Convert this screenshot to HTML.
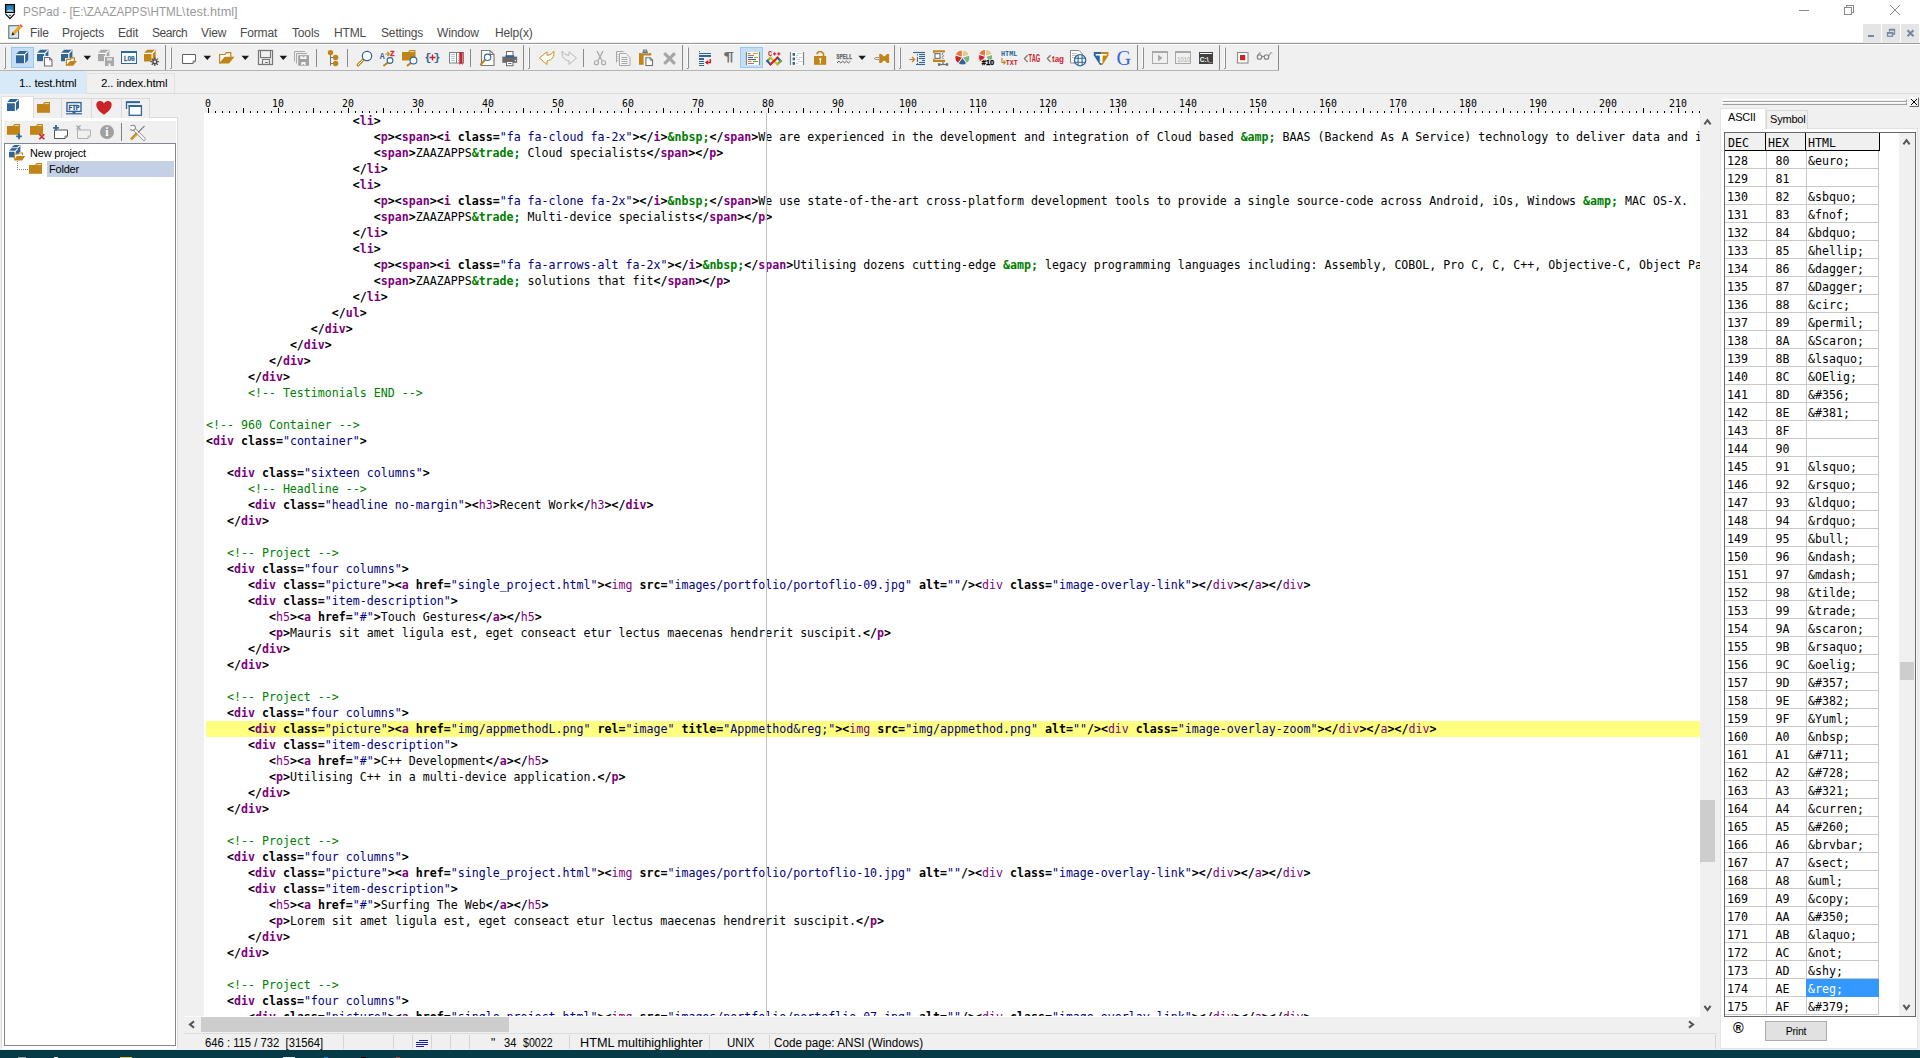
<!DOCTYPE html>
<html><head><meta charset="utf-8"><title>PSPad</title>
<style>
*{box-sizing:border-box}
html,body{margin:0;padding:0}
body{width:1920px;height:1058px;overflow:hidden;background:#f0f0f0;position:relative;font-family:"Liberation Sans",sans-serif;font-size:12px;color:#000}
.abs,#app div,#app span,#app i,#app svg{position:absolute}
#app{position:absolute;left:0;top:0;width:1920px;height:1058px;overflow:hidden}
/* title + menu */
#titlebar{left:0;top:0;width:1920px;height:43px;background:#fff}
#title,#title2{left:23px;top:5px;font-size:12px;color:#999;white-space:pre;transform-origin:0 0}
#title2{left:185.6px}
.menu span{top:26px;font-size:12px;letter-spacing:-0.15px;color:#4a4a4a;white-space:pre}
/* toolbar */
#tbline{left:0;top:43px;width:1920px;height:1px;background:#9a9a9a}
#tbline0{left:0;top:42px;width:1920px;height:1px;background:#ececec}
#tbline2{left:0;top:44px;width:1920px;height:1px;background:#fff}
#tbbot{left:0;top:70px;width:1279px;height:1px;background:#b4b4b4}
/* file tabs */
#tab1{left:0;top:71px;width:86px;height:23px;background:#d8e9f8}
#tab2{left:86px;top:73px;width:89px;height:20px;background:#f0f0f0;border:1px solid #e2e2e2;border-bottom:none}
.ftab{font-size:11.5px;white-space:pre;top:4px;letter-spacing:-0.15px}
#tabline{left:0;top:93px;width:1920px;height:1px;background:#dcdcdc}
/* editor */
#editor{left:204px;top:113px;width:1496px;height:903px;background:#fff;overflow:hidden}
#gutter{left:184px;top:113px;width:20px;height:903px;background:#f5f5f5}
#code{left:2px;top:0;width:1494px}
#app .ln{position:relative;height:16px;line-height:16px;white-space:pre;font-family:"DejaVu Sans Mono","Liberation Mono",monospace;font-size:11.627px;color:#000;width:1494px;overflow:hidden}
#app .ln span{position:static}
#app .ln.hl{background:#ffff80}
.T{color:#800080;font-weight:bold}
.t{color:#800080}
.b{font-weight:bold}
.v{color:#000080}
.e{color:#008000;font-weight:bold}
.c{color:#008000}
#margin{left:766px;top:113px;width:1px;height:903px;background:#c0c0c0}
/* ruler */
#ruler{left:204px;top:94px;width:1496px;height:19px;overflow:hidden}
.tk{width:1px;height:5px;top:14px;background:#000}
.td{width:1px;height:2px;top:17px;background:#000}
.rn{top:5px;width:30px;text-align:center;font-family:"DejaVu Sans Mono","Liberation Mono",monospace;font-size:9.9px;line-height:10px}

/* left panel */
#lp{left:1px;top:117px;width:177px;height:932px;background:#fff;border:1px solid #d9d9d9;border-bottom-color:#fff}
#lptb{left:4px;top:121px;width:172px;height:22px;background:#f0f0f0}
#tree{left:4px;top:143px;width:172px;height:903px;background:#fff;border:1px solid #828790}
.ltab{top:98px;height:20px;background:#f0f0f0;border:1px solid #d9d9d9;border-bottom:none}
#ltab0{left:1px;top:96px;width:33px;height:22px;background:#fff;border:1px solid #e0e0e0;border-bottom:none}
.tv{font-size:11px;white-space:pre;letter-spacing:-0.2px}
#sel{left:47px;top:161px;width:127px;height:16px;background:#c4d0e6}
/* right panel */
#vs{left:1700px;top:113px;width:17px;height:903px;background:#f0f0f0}
#vthumb{left:1700px;top:800px;width:15px;height:62px;background:#cdcdcd}
#rp{left:1720px;top:128px;width:198px;height:921px;background:#fff;border:1px solid #e3e3e3}
#rtab0{left:1720px;top:108px;width:46px;height:21px;background:#fff;border:1px solid #e3e3e3;border-bottom:none}
#rtab1{left:1766px;top:110px;width:42px;height:19px;background:#f0f0f0;border:1px solid #d9d9d9;border-bottom:none}
.rtl{font-size:11px;white-space:pre;letter-spacing:-0.2px}
#grid{left:1724px;top:132px;width:192px;height:885px;background:#fff;border:1px solid #696969;overflow:hidden}
#gh{left:0;top:0;width:155px;height:18px;background:#f0f0f0;border:1px solid #000;border-left:none;border-top:none}
.hd{top:1px;font-family:"DejaVu Sans Mono","Liberation Mono",monospace;font-size:11.627px;line-height:18px;white-space:pre}
#gh i{top:0;width:1px;height:17px;background:#000;display:block}
#app .tr{position:relative;width:154px;height:18px;border-bottom:1px solid #c8c8c8;font-family:"DejaVu Sans Mono","Liberation Mono",monospace;font-size:11.627px;line-height:20px;white-space:pre}
#rows{left:0;top:18px;width:154px}
.c1{left:2px;top:0}
.c2{left:41px;top:0;width:40px;text-align:center;padding-right:8px;border-left:1px solid #c8c8c8;height:18px}
.c3{left:81px;top:0;width:73px;padding-left:1px;border-left:1px solid #c8c8c8;border-right:1px solid #c8c8c8;height:18px}
#app .c3.sel{background:#3399ff;color:#fff;left:81px;width:73px;padding-left:2px;border:none}
#gs{left:174px;top:0;width:16px;height:883px;background:#f0f0f0}
#gthumb{left:175px;top:529px;width:14px;height:18px;background:#cdcdcd}
#print{left:1765px;top:1021px;width:62px;height:20px;background:#e1e1e1;border:1px solid #adadad;text-align:center;line-height:18px;font-size:10.5px;letter-spacing:-0.2px}
/* bottom */
#hs{left:184px;top:1016px;width:1516px;height:17px;background:#f0f0f0;border-top:1px solid #fff}
#hthumb{left:201px;top:1017px;width:308px;height:15px;background:#cdcdcd}
#sb{left:184px;top:1033px;width:1533px;height:17px;background:#f0f0f0;border-top:1px solid #dcdcdc}
.sbt{top:1036px;font-size:12px;white-space:pre;transform-origin:0 0}
.sbs{top:1035px;width:1px;height:14px;background:#d4d4d4}
#task{left:0;top:1050px;width:1920px;height:8px;background:#063a46}
.chev{fill:none;stroke:#5a5a5a;stroke-width:2}

.grip{left:1722px;width:1185px;height:3px;border-top:1px solid #fff;border-left:1px solid #fff;border-bottom:1px solid #a0a0a0;border-right:1px solid #a0a0a0}
#rpx{left:1909px;top:97px;width:10px;height:10px;border:1px solid #fff;border-right-color:#696969;border-bottom-color:#696969;background:#f0f0f0}
</style></head><body><div id="app">
<div id="titlebar"></div>
<span id="title" style="transform:scaleX(.966)">PSPad - [E:\ZAAZAPPS\HTML\</span><span id="title2" style="transform:scaleX(1.06)">test.html]</span>
<div class="menu"><span style="left:30px">File</span><span style="left:62px">Projects</span><span style="left:118px">Edit</span><span style="left:152px;letter-spacing:-0.45px">Search</span><span style="left:201px">View</span><span style="left:240px">Format</span><span style="left:292px">Tools</span><span style="left:334px">HTML</span><span style="left:381px">Settings</span><span style="left:437px">Window</span><span style="left:495px">Help(x)</span></div>
<div id="tbline0"></div><div id="tbline"></div><div id="tbline2"></div><div id="tbbot"></div>
<div id="tabline"></div>
<div id="tab1"><span class="ftab" style="left:19px;top:6px">1.. test.html</span></div>
<div id="tab2"><span class="ftab" style="left:14px;top:3px">2.. index.html</span></div>
<div id="ruler"><i class="tk" style="left:4px"></i><i class="td" style="left:11px"></i><i class="td" style="left:18px"></i><i class="td" style="left:25px"></i><i class="td" style="left:32px"></i><i class="tk" style="left:39px"></i><i class="td" style="left:46px"></i><i class="td" style="left:53px"></i><i class="td" style="left:60px"></i><i class="td" style="left:67px"></i><i class="tk" style="left:74px"></i><i class="td" style="left:81px"></i><i class="td" style="left:88px"></i><i class="td" style="left:95px"></i><i class="td" style="left:102px"></i><i class="tk" style="left:109px"></i><i class="td" style="left:116px"></i><i class="td" style="left:123px"></i><i class="td" style="left:130px"></i><i class="td" style="left:137px"></i><i class="tk" style="left:144px"></i><i class="td" style="left:151px"></i><i class="td" style="left:158px"></i><i class="td" style="left:165px"></i><i class="td" style="left:172px"></i><i class="tk" style="left:179px"></i><i class="td" style="left:186px"></i><i class="td" style="left:193px"></i><i class="td" style="left:200px"></i><i class="td" style="left:207px"></i><i class="tk" style="left:214px"></i><i class="td" style="left:221px"></i><i class="td" style="left:228px"></i><i class="td" style="left:235px"></i><i class="td" style="left:242px"></i><i class="tk" style="left:249px"></i><i class="td" style="left:256px"></i><i class="td" style="left:263px"></i><i class="td" style="left:270px"></i><i class="td" style="left:277px"></i><i class="tk" style="left:284px"></i><i class="td" style="left:291px"></i><i class="td" style="left:298px"></i><i class="td" style="left:305px"></i><i class="td" style="left:312px"></i><i class="tk" style="left:319px"></i><i class="td" style="left:326px"></i><i class="td" style="left:333px"></i><i class="td" style="left:340px"></i><i class="td" style="left:347px"></i><i class="tk" style="left:354px"></i><i class="td" style="left:361px"></i><i class="td" style="left:368px"></i><i class="td" style="left:375px"></i><i class="td" style="left:382px"></i><i class="tk" style="left:389px"></i><i class="td" style="left:396px"></i><i class="td" style="left:403px"></i><i class="td" style="left:410px"></i><i class="td" style="left:417px"></i><i class="tk" style="left:424px"></i><i class="td" style="left:431px"></i><i class="td" style="left:438px"></i><i class="td" style="left:445px"></i><i class="td" style="left:452px"></i><i class="tk" style="left:459px"></i><i class="td" style="left:466px"></i><i class="td" style="left:473px"></i><i class="td" style="left:480px"></i><i class="td" style="left:487px"></i><i class="tk" style="left:494px"></i><i class="td" style="left:501px"></i><i class="td" style="left:508px"></i><i class="td" style="left:515px"></i><i class="td" style="left:522px"></i><i class="tk" style="left:529px"></i><i class="td" style="left:536px"></i><i class="td" style="left:543px"></i><i class="td" style="left:550px"></i><i class="td" style="left:557px"></i><i class="tk" style="left:564px"></i><i class="td" style="left:571px"></i><i class="td" style="left:578px"></i><i class="td" style="left:585px"></i><i class="td" style="left:592px"></i><i class="tk" style="left:599px"></i><i class="td" style="left:606px"></i><i class="td" style="left:613px"></i><i class="td" style="left:620px"></i><i class="td" style="left:627px"></i><i class="tk" style="left:634px"></i><i class="td" style="left:641px"></i><i class="td" style="left:648px"></i><i class="td" style="left:655px"></i><i class="td" style="left:662px"></i><i class="tk" style="left:669px"></i><i class="td" style="left:676px"></i><i class="td" style="left:683px"></i><i class="td" style="left:690px"></i><i class="td" style="left:697px"></i><i class="tk" style="left:704px"></i><i class="td" style="left:711px"></i><i class="td" style="left:718px"></i><i class="td" style="left:725px"></i><i class="td" style="left:732px"></i><i class="tk" style="left:739px"></i><i class="td" style="left:746px"></i><i class="td" style="left:753px"></i><i class="td" style="left:760px"></i><i class="td" style="left:767px"></i><i class="tk" style="left:774px"></i><i class="td" style="left:781px"></i><i class="td" style="left:788px"></i><i class="td" style="left:795px"></i><i class="td" style="left:802px"></i><i class="tk" style="left:809px"></i><i class="td" style="left:816px"></i><i class="td" style="left:823px"></i><i class="td" style="left:830px"></i><i class="td" style="left:837px"></i><i class="tk" style="left:844px"></i><i class="td" style="left:851px"></i><i class="td" style="left:858px"></i><i class="td" style="left:865px"></i><i class="td" style="left:872px"></i><i class="tk" style="left:879px"></i><i class="td" style="left:886px"></i><i class="td" style="left:893px"></i><i class="td" style="left:900px"></i><i class="td" style="left:907px"></i><i class="tk" style="left:914px"></i><i class="td" style="left:921px"></i><i class="td" style="left:928px"></i><i class="td" style="left:935px"></i><i class="td" style="left:942px"></i><i class="tk" style="left:949px"></i><i class="td" style="left:956px"></i><i class="td" style="left:963px"></i><i class="td" style="left:970px"></i><i class="td" style="left:977px"></i><i class="tk" style="left:984px"></i><i class="td" style="left:991px"></i><i class="td" style="left:998px"></i><i class="td" style="left:1005px"></i><i class="td" style="left:1012px"></i><i class="tk" style="left:1019px"></i><i class="td" style="left:1026px"></i><i class="td" style="left:1033px"></i><i class="td" style="left:1040px"></i><i class="td" style="left:1047px"></i><i class="tk" style="left:1054px"></i><i class="td" style="left:1061px"></i><i class="td" style="left:1068px"></i><i class="td" style="left:1075px"></i><i class="td" style="left:1082px"></i><i class="tk" style="left:1089px"></i><i class="td" style="left:1096px"></i><i class="td" style="left:1103px"></i><i class="td" style="left:1110px"></i><i class="td" style="left:1117px"></i><i class="tk" style="left:1124px"></i><i class="td" style="left:1131px"></i><i class="td" style="left:1138px"></i><i class="td" style="left:1145px"></i><i class="td" style="left:1152px"></i><i class="tk" style="left:1159px"></i><i class="td" style="left:1166px"></i><i class="td" style="left:1173px"></i><i class="td" style="left:1180px"></i><i class="td" style="left:1187px"></i><i class="tk" style="left:1194px"></i><i class="td" style="left:1201px"></i><i class="td" style="left:1208px"></i><i class="td" style="left:1215px"></i><i class="td" style="left:1222px"></i><i class="tk" style="left:1229px"></i><i class="td" style="left:1236px"></i><i class="td" style="left:1243px"></i><i class="td" style="left:1250px"></i><i class="td" style="left:1257px"></i><i class="tk" style="left:1264px"></i><i class="td" style="left:1271px"></i><i class="td" style="left:1278px"></i><i class="td" style="left:1285px"></i><i class="td" style="left:1292px"></i><i class="tk" style="left:1299px"></i><i class="td" style="left:1306px"></i><i class="td" style="left:1313px"></i><i class="td" style="left:1320px"></i><i class="td" style="left:1327px"></i><i class="tk" style="left:1334px"></i><i class="td" style="left:1341px"></i><i class="td" style="left:1348px"></i><i class="td" style="left:1355px"></i><i class="td" style="left:1362px"></i><i class="tk" style="left:1369px"></i><i class="td" style="left:1376px"></i><i class="td" style="left:1383px"></i><i class="td" style="left:1390px"></i><i class="td" style="left:1397px"></i><i class="tk" style="left:1404px"></i><i class="td" style="left:1411px"></i><i class="td" style="left:1418px"></i><i class="td" style="left:1425px"></i><i class="td" style="left:1432px"></i><i class="tk" style="left:1439px"></i><i class="td" style="left:1446px"></i><i class="td" style="left:1453px"></i><i class="td" style="left:1460px"></i><i class="td" style="left:1467px"></i><i class="tk" style="left:1474px"></i><i class="td" style="left:1481px"></i><i class="td" style="left:1488px"></i><i class="td" style="left:1495px"></i><span class="rn" style="left:-11px">0</span><span class="rn" style="left:59px">10</span><span class="rn" style="left:129px">20</span><span class="rn" style="left:199px">30</span><span class="rn" style="left:269px">40</span><span class="rn" style="left:339px">50</span><span class="rn" style="left:409px">60</span><span class="rn" style="left:479px">70</span><span class="rn" style="left:549px">80</span><span class="rn" style="left:619px">90</span><span class="rn" style="left:689px">100</span><span class="rn" style="left:759px">110</span><span class="rn" style="left:829px">120</span><span class="rn" style="left:899px">130</span><span class="rn" style="left:969px">140</span><span class="rn" style="left:1039px">150</span><span class="rn" style="left:1109px">160</span><span class="rn" style="left:1179px">170</span><span class="rn" style="left:1249px">180</span><span class="rn" style="left:1319px">190</span><span class="rn" style="left:1389px">200</span><span class="rn" style="left:1459px">210</span></div>
<div id="editor"><div id="code">
<div class="ln">                     <span class="b">&lt;</span><span class="T">li</span><span class="b">&gt;</span></div>
<div class="ln">                        <span class="b">&lt;</span><span class="T">p</span><span class="b">&gt;</span><span class="b">&lt;</span><span class="T">span</span><span class="b">&gt;</span><span class="b">&lt;</span><span class="T">i</span> <span class="b">class=</span><span class="v">"fa fa-cloud fa-2x"</span><span class="b">&gt;</span><span class="b">&lt;/</span><span class="T">i</span><span class="b">&gt;</span><span class="e">&amp;nbsp;</span><span class="b">&lt;/</span><span class="T">span</span><span class="b">&gt;</span>We are experienced in the development and integration of Cloud based <span class="e">&amp;amp;</span> BAAS (Backend As A Service) technology to deliver data and information</div>
<div class="ln">                        <span class="b">&lt;</span><span class="T">span</span><span class="b">&gt;</span>ZAAZAPPS<span class="e">&amp;trade;</span> Cloud specialists<span class="b">&lt;/</span><span class="T">span</span><span class="b">&gt;</span><span class="b">&lt;/</span><span class="T">p</span><span class="b">&gt;</span></div>
<div class="ln">                     <span class="b">&lt;/</span><span class="T">li</span><span class="b">&gt;</span></div>
<div class="ln">                     <span class="b">&lt;</span><span class="T">li</span><span class="b">&gt;</span></div>
<div class="ln">                        <span class="b">&lt;</span><span class="T">p</span><span class="b">&gt;</span><span class="b">&lt;</span><span class="T">span</span><span class="b">&gt;</span><span class="b">&lt;</span><span class="T">i</span> <span class="b">class=</span><span class="v">"fa fa-clone fa-2x"</span><span class="b">&gt;</span><span class="b">&lt;/</span><span class="T">i</span><span class="b">&gt;</span><span class="e">&amp;nbsp;</span><span class="b">&lt;/</span><span class="T">span</span><span class="b">&gt;</span>We use state-of-the-art cross-platform development tools to provide a single source-code across Android, iOs, Windows <span class="e">&amp;amp;</span> MAC OS-X.</div>
<div class="ln">                        <span class="b">&lt;</span><span class="T">span</span><span class="b">&gt;</span>ZAAZAPPS<span class="e">&amp;trade;</span> Multi-device specialists<span class="b">&lt;/</span><span class="T">span</span><span class="b">&gt;</span><span class="b">&lt;/</span><span class="T">p</span><span class="b">&gt;</span></div>
<div class="ln">                     <span class="b">&lt;/</span><span class="T">li</span><span class="b">&gt;</span></div>
<div class="ln">                     <span class="b">&lt;</span><span class="T">li</span><span class="b">&gt;</span></div>
<div class="ln">                        <span class="b">&lt;</span><span class="T">p</span><span class="b">&gt;</span><span class="b">&lt;</span><span class="T">span</span><span class="b">&gt;</span><span class="b">&lt;</span><span class="T">i</span> <span class="b">class=</span><span class="v">"fa fa-arrows-alt fa-2x"</span><span class="b">&gt;</span><span class="b">&lt;/</span><span class="T">i</span><span class="b">&gt;</span><span class="e">&amp;nbsp;</span><span class="b">&lt;/</span><span class="T">span</span><span class="b">&gt;</span>Utilising dozens cutting-edge <span class="e">&amp;amp;</span> legacy programming languages including: Assembly, COBOL, Pro C, C, C++, Objective-C, Object Pascal</div>
<div class="ln">                        <span class="b">&lt;</span><span class="T">span</span><span class="b">&gt;</span>ZAAZAPPS<span class="e">&amp;trade;</span> solutions that fit<span class="b">&lt;/</span><span class="T">span</span><span class="b">&gt;</span><span class="b">&lt;/</span><span class="T">p</span><span class="b">&gt;</span></div>
<div class="ln">                     <span class="b">&lt;/</span><span class="T">li</span><span class="b">&gt;</span></div>
<div class="ln">                  <span class="b">&lt;/</span><span class="T">ul</span><span class="b">&gt;</span></div>
<div class="ln">               <span class="b">&lt;/</span><span class="T">div</span><span class="b">&gt;</span></div>
<div class="ln">            <span class="b">&lt;/</span><span class="T">div</span><span class="b">&gt;</span></div>
<div class="ln">         <span class="b">&lt;/</span><span class="T">div</span><span class="b">&gt;</span></div>
<div class="ln">      <span class="b">&lt;/</span><span class="T">div</span><span class="b">&gt;</span></div>
<div class="ln">      <span class="c">&lt;!-- Testimonials END --&gt;</span></div>
<div class="ln"></div>
<div class="ln"><span class="c">&lt;!-- 960 Container --&gt;</span></div>
<div class="ln"><span class="b">&lt;</span><span class="T">div</span> <span class="b">class=</span><span class="v">"container"</span><span class="b">&gt;</span></div>
<div class="ln"></div>
<div class="ln">   <span class="b">&lt;</span><span class="T">div</span> <span class="b">class=</span><span class="v">"sixteen columns"</span><span class="b">&gt;</span></div>
<div class="ln">      <span class="c">&lt;!-- Headline --&gt;</span></div>
<div class="ln">      <span class="b">&lt;</span><span class="T">div</span> <span class="b">class=</span><span class="v">"headline no-margin"</span><span class="b">&gt;</span><span class="b">&lt;</span><span class="t">h3</span><span class="b">&gt;</span>Recent Work<span class="b">&lt;/</span><span class="t">h3</span><span class="b">&gt;</span><span class="b">&lt;/</span><span class="T">div</span><span class="b">&gt;</span></div>
<div class="ln">   <span class="b">&lt;/</span><span class="T">div</span><span class="b">&gt;</span></div>
<div class="ln"></div>
<div class="ln">   <span class="c">&lt;!-- Project --&gt;</span></div>
<div class="ln">   <span class="b">&lt;</span><span class="T">div</span> <span class="b">class=</span><span class="v">"four columns"</span><span class="b">&gt;</span></div>
<div class="ln">      <span class="b">&lt;</span><span class="T">div</span> <span class="b">class=</span><span class="v">"picture"</span><span class="b">&gt;</span><span class="b">&lt;</span><span class="T">a</span> <span class="b">href=</span><span class="v">"single_project.html"</span><span class="b">&gt;</span><span class="b">&lt;</span><span class="t">img</span> <span class="b">src=</span><span class="v">"images/portfolio/portoflio-09.jpg"</span> <span class="b">alt=</span><span class="v">""</span><span class="b">/&gt;</span><span class="b">&lt;</span><span class="t">div</span> <span class="b">class=</span><span class="v">"image-overlay-link"</span><span class="b">&gt;</span><span class="b">&lt;/</span><span class="t">div</span><span class="b">&gt;</span><span class="b">&lt;/</span><span class="t">a</span><span class="b">&gt;</span><span class="b">&lt;/</span><span class="t">div</span><span class="b">&gt;</span></div>
<div class="ln">      <span class="b">&lt;</span><span class="T">div</span> <span class="b">class=</span><span class="v">"item-description"</span><span class="b">&gt;</span></div>
<div class="ln">         <span class="b">&lt;</span><span class="t">h5</span><span class="b">&gt;</span><span class="b">&lt;</span><span class="T">a</span> <span class="b">href=</span><span class="v">"#"</span><span class="b">&gt;</span>Touch Gestures<span class="b">&lt;/</span><span class="T">a</span><span class="b">&gt;</span><span class="b">&lt;/</span><span class="t">h5</span><span class="b">&gt;</span></div>
<div class="ln">         <span class="b">&lt;</span><span class="T">p</span><span class="b">&gt;</span>Mauris sit amet ligula est, eget conseact etur lectus maecenas hendrerit suscipit.<span class="b">&lt;/</span><span class="T">p</span><span class="b">&gt;</span></div>
<div class="ln">      <span class="b">&lt;/</span><span class="T">div</span><span class="b">&gt;</span></div>
<div class="ln">   <span class="b">&lt;/</span><span class="T">div</span><span class="b">&gt;</span></div>
<div class="ln"></div>
<div class="ln">   <span class="c">&lt;!-- Project --&gt;</span></div>
<div class="ln">   <span class="b">&lt;</span><span class="T">div</span> <span class="b">class=</span><span class="v">"four columns"</span><span class="b">&gt;</span></div>
<div class="ln hl">      <span class="b">&lt;</span><span class="T">div</span> <span class="b">class=</span><span class="v">"picture"</span><span class="b">&gt;</span><span class="b">&lt;</span><span class="T">a</span> <span class="b">href=</span><span class="v">"img/appmethodL.png"</span> <span class="b">rel=</span><span class="v">"image"</span> <span class="b">title=</span><span class="v">"Appmethod&amp;reg;"</span><span class="b">&gt;</span><span class="b">&lt;</span><span class="t">img</span> <span class="b">src=</span><span class="v">"img/appmethod.png"</span> <span class="b">alt=</span><span class="v">""</span><span class="b">/&gt;</span><span class="b">&lt;</span><span class="t">div</span> <span class="b">class=</span><span class="v">"image-overlay-zoom"</span><span class="b">&gt;</span><span class="b">&lt;/</span><span class="t">div</span><span class="b">&gt;</span><span class="b">&lt;/</span><span class="t">a</span><span class="b">&gt;</span><span class="b">&lt;/</span><span class="t">div</span><span class="b">&gt;</span></div>
<div class="ln">      <span class="b">&lt;</span><span class="T">div</span> <span class="b">class=</span><span class="v">"item-description"</span><span class="b">&gt;</span></div>
<div class="ln">         <span class="b">&lt;</span><span class="t">h5</span><span class="b">&gt;</span><span class="b">&lt;</span><span class="T">a</span> <span class="b">href=</span><span class="v">"#"</span><span class="b">&gt;</span>C++ Development<span class="b">&lt;/</span><span class="T">a</span><span class="b">&gt;</span><span class="b">&lt;/</span><span class="t">h5</span><span class="b">&gt;</span></div>
<div class="ln">         <span class="b">&lt;</span><span class="T">p</span><span class="b">&gt;</span>Utilising C++ in a multi-device application.<span class="b">&lt;/</span><span class="T">p</span><span class="b">&gt;</span></div>
<div class="ln">      <span class="b">&lt;/</span><span class="T">div</span><span class="b">&gt;</span></div>
<div class="ln">   <span class="b">&lt;/</span><span class="T">div</span><span class="b">&gt;</span></div>
<div class="ln"></div>
<div class="ln">   <span class="c">&lt;!-- Project --&gt;</span></div>
<div class="ln">   <span class="b">&lt;</span><span class="T">div</span> <span class="b">class=</span><span class="v">"four columns"</span><span class="b">&gt;</span></div>
<div class="ln">      <span class="b">&lt;</span><span class="T">div</span> <span class="b">class=</span><span class="v">"picture"</span><span class="b">&gt;</span><span class="b">&lt;</span><span class="T">a</span> <span class="b">href=</span><span class="v">"single_project.html"</span><span class="b">&gt;</span><span class="b">&lt;</span><span class="t">img</span> <span class="b">src=</span><span class="v">"images/portfolio/portoflio-10.jpg"</span> <span class="b">alt=</span><span class="v">""</span><span class="b">/&gt;</span><span class="b">&lt;</span><span class="t">div</span> <span class="b">class=</span><span class="v">"image-overlay-link"</span><span class="b">&gt;</span><span class="b">&lt;/</span><span class="t">div</span><span class="b">&gt;</span><span class="b">&lt;/</span><span class="t">a</span><span class="b">&gt;</span><span class="b">&lt;/</span><span class="t">div</span><span class="b">&gt;</span></div>
<div class="ln">      <span class="b">&lt;</span><span class="T">div</span> <span class="b">class=</span><span class="v">"item-description"</span><span class="b">&gt;</span></div>
<div class="ln">         <span class="b">&lt;</span><span class="t">h5</span><span class="b">&gt;</span><span class="b">&lt;</span><span class="T">a</span> <span class="b">href=</span><span class="v">"#"</span><span class="b">&gt;</span>Surfing The Web<span class="b">&lt;/</span><span class="T">a</span><span class="b">&gt;</span><span class="b">&lt;/</span><span class="t">h5</span><span class="b">&gt;</span></div>
<div class="ln">         <span class="b">&lt;</span><span class="T">p</span><span class="b">&gt;</span>Lorem sit amet ligula est, eget conseact etur lectus maecenas hendrerit suscipit.<span class="b">&lt;/</span><span class="T">p</span><span class="b">&gt;</span></div>
<div class="ln">      <span class="b">&lt;/</span><span class="T">div</span><span class="b">&gt;</span></div>
<div class="ln">   <span class="b">&lt;/</span><span class="T">div</span><span class="b">&gt;</span></div>
<div class="ln"></div>
<div class="ln">   <span class="c">&lt;!-- Project --&gt;</span></div>
<div class="ln">   <span class="b">&lt;</span><span class="T">div</span> <span class="b">class=</span><span class="v">"four columns"</span><span class="b">&gt;</span></div>
<div class="ln">      <span class="b">&lt;</span><span class="T">div</span> <span class="b">class=</span><span class="v">"picture"</span><span class="b">&gt;</span><span class="b">&lt;</span><span class="T">a</span> <span class="b">href=</span><span class="v">"single_project.html"</span><span class="b">&gt;</span><span class="b">&lt;</span><span class="t">img</span> <span class="b">src=</span><span class="v">"images/portfolio/portoflio-07.jpg"</span> <span class="b">alt=</span><span class="v">""</span><span class="b">/&gt;</span><span class="b">&lt;</span><span class="t">div</span> <span class="b">class=</span><span class="v">"image-overlay-link"</span><span class="b">&gt;</span><span class="b">&lt;/</span><span class="t">div</span><span class="b">&gt;</span><span class="b">&lt;/</span><span class="t">a</span><span class="b">&gt;</span><span class="b">&lt;/</span><span class="t">div</span><span class="b">&gt;</span></div>
</div></div>
<div id="margin"></div>
<div id="lp"></div><div id="lptb"></div>
<div id="ltab0"></div><div class="ltab" style="left:33px;width:29px"></div><div class="ltab" style="left:61px;width:31px"></div><div class="ltab" style="left:91px;width:31px"></div><div class="ltab" style="left:121px;width:29px"></div>
<div id="tree"></div><div id="sel"></div>
<span class="tv" style="left:30px;top:147px">New project</span><span class="tv" style="left:49px;top:163px">Folder</span>

<div id="vs"></div><div id="vthumb"></div>
<div class="grip" style="top:99px;width:185px"></div><div class="grip" style="top:102px;width:185px"></div><div id="rpx"></div><svg style="left:1910px;top:98px" width="8" height="8"><path d="M1 1L7 7M7 1L1 7" stroke="#000" stroke-width="1" fill="none"/></svg>
<div id="rp"></div><div id="rtab0"></div><div id="rtab1"></div>
<span class="rtl" style="left:1728px;top:111px">ASCII</span><span class="rtl" style="left:1770px;top:113px">Symbol</span>
<div id="grid"><div id="gh"><span class="hd" style="left:3px">DEC</span><i style="left:40px"></i><span class="hd" style="left:43px">HEX</span><i style="left:80px"></i><span class="hd" style="left:83px">HTML</span></div>
<div id="rows">
<div class="tr"><span class="c1">128</span><span class="c2">80</span><span class="c3">&amp;euro;</span></div>
<div class="tr"><span class="c1">129</span><span class="c2">81</span><span class="c3"></span></div>
<div class="tr"><span class="c1">130</span><span class="c2">82</span><span class="c3">&amp;sbquo;</span></div>
<div class="tr"><span class="c1">131</span><span class="c2">83</span><span class="c3">&amp;fnof;</span></div>
<div class="tr"><span class="c1">132</span><span class="c2">84</span><span class="c3">&amp;bdquo;</span></div>
<div class="tr"><span class="c1">133</span><span class="c2">85</span><span class="c3">&amp;hellip;</span></div>
<div class="tr"><span class="c1">134</span><span class="c2">86</span><span class="c3">&amp;dagger;</span></div>
<div class="tr"><span class="c1">135</span><span class="c2">87</span><span class="c3">&amp;Dagger;</span></div>
<div class="tr"><span class="c1">136</span><span class="c2">88</span><span class="c3">&amp;circ;</span></div>
<div class="tr"><span class="c1">137</span><span class="c2">89</span><span class="c3">&amp;permil;</span></div>
<div class="tr"><span class="c1">138</span><span class="c2">8A</span><span class="c3">&amp;Scaron;</span></div>
<div class="tr"><span class="c1">139</span><span class="c2">8B</span><span class="c3">&amp;lsaquo;</span></div>
<div class="tr"><span class="c1">140</span><span class="c2">8C</span><span class="c3">&amp;OElig;</span></div>
<div class="tr"><span class="c1">141</span><span class="c2">8D</span><span class="c3">&amp;#356;</span></div>
<div class="tr"><span class="c1">142</span><span class="c2">8E</span><span class="c3">&amp;#381;</span></div>
<div class="tr"><span class="c1">143</span><span class="c2">8F</span><span class="c3"></span></div>
<div class="tr"><span class="c1">144</span><span class="c2">90</span><span class="c3"></span></div>
<div class="tr"><span class="c1">145</span><span class="c2">91</span><span class="c3">&amp;lsquo;</span></div>
<div class="tr"><span class="c1">146</span><span class="c2">92</span><span class="c3">&amp;rsquo;</span></div>
<div class="tr"><span class="c1">147</span><span class="c2">93</span><span class="c3">&amp;ldquo;</span></div>
<div class="tr"><span class="c1">148</span><span class="c2">94</span><span class="c3">&amp;rdquo;</span></div>
<div class="tr"><span class="c1">149</span><span class="c2">95</span><span class="c3">&amp;bull;</span></div>
<div class="tr"><span class="c1">150</span><span class="c2">96</span><span class="c3">&amp;ndash;</span></div>
<div class="tr"><span class="c1">151</span><span class="c2">97</span><span class="c3">&amp;mdash;</span></div>
<div class="tr"><span class="c1">152</span><span class="c2">98</span><span class="c3">&amp;tilde;</span></div>
<div class="tr"><span class="c1">153</span><span class="c2">99</span><span class="c3">&amp;trade;</span></div>
<div class="tr"><span class="c1">154</span><span class="c2">9A</span><span class="c3">&amp;scaron;</span></div>
<div class="tr"><span class="c1">155</span><span class="c2">9B</span><span class="c3">&amp;rsaquo;</span></div>
<div class="tr"><span class="c1">156</span><span class="c2">9C</span><span class="c3">&amp;oelig;</span></div>
<div class="tr"><span class="c1">157</span><span class="c2">9D</span><span class="c3">&amp;#357;</span></div>
<div class="tr"><span class="c1">158</span><span class="c2">9E</span><span class="c3">&amp;#382;</span></div>
<div class="tr"><span class="c1">159</span><span class="c2">9F</span><span class="c3">&amp;Yuml;</span></div>
<div class="tr"><span class="c1">160</span><span class="c2">A0</span><span class="c3">&amp;nbsp;</span></div>
<div class="tr"><span class="c1">161</span><span class="c2">A1</span><span class="c3">&amp;#711;</span></div>
<div class="tr"><span class="c1">162</span><span class="c2">A2</span><span class="c3">&amp;#728;</span></div>
<div class="tr"><span class="c1">163</span><span class="c2">A3</span><span class="c3">&amp;#321;</span></div>
<div class="tr"><span class="c1">164</span><span class="c2">A4</span><span class="c3">&amp;curren;</span></div>
<div class="tr"><span class="c1">165</span><span class="c2">A5</span><span class="c3">&amp;#260;</span></div>
<div class="tr"><span class="c1">166</span><span class="c2">A6</span><span class="c3">&amp;brvbar;</span></div>
<div class="tr"><span class="c1">167</span><span class="c2">A7</span><span class="c3">&amp;sect;</span></div>
<div class="tr"><span class="c1">168</span><span class="c2">A8</span><span class="c3">&amp;uml;</span></div>
<div class="tr"><span class="c1">169</span><span class="c2">A9</span><span class="c3">&amp;copy;</span></div>
<div class="tr"><span class="c1">170</span><span class="c2">AA</span><span class="c3">&amp;#350;</span></div>
<div class="tr"><span class="c1">171</span><span class="c2">AB</span><span class="c3">&amp;laquo;</span></div>
<div class="tr"><span class="c1">172</span><span class="c2">AC</span><span class="c3">&amp;not;</span></div>
<div class="tr"><span class="c1">173</span><span class="c2">AD</span><span class="c3">&amp;shy;</span></div>
<div class="tr"><span class="c1">174</span><span class="c2">AE</span><span class="c3 sel">&amp;reg;</span></div>
<div class="tr"><span class="c1">175</span><span class="c2">AF</span><span class="c3">&amp;#379;</span></div>
</div>
<div id="gs"></div><div id="gthumb"></div>
</div>
<span style="left:1733px;top:1020px;font-size:14.5px;font-weight:bold">&#174;</span>
<div id="print">Print</div>

<div id="hs"></div><div id="hthumb"></div>
<div id="sb"></div>
<span class="sbt" style="left:205px;transform:scaleX(.938)">646 : 115 / 732  [31564]</span>
<span class="sbt" style="left:491px">"</span><span class="sbt" style="left:504px;transform:scaleX(.93)">34</span><span class="sbt" style="left:522.5px;transform:scaleX(.885)">$0022</span>
<span class="sbt" style="left:580px;transform:scaleX(1.055)">HTML multihighlighter</span>
<span class="sbt" style="left:727px;transform:scaleX(.96)">UNIX</span>
<span class="sbt" style="left:774px;transform:scaleX(.976)">Code page: ANSI (Windows)</span>
<i class="sbs" style="left:343px"></i><i class="sbs" style="left:393px"></i><i class="sbs" style="left:412px"></i><i class="sbs" style="left:431px"></i><i class="sbs" style="left:450px"></i><i class="sbs" style="left:469px"></i><i class="sbs" style="left:569px"></i><i class="sbs" style="left:709px"></i><i class="sbs" style="left:769px"></i><i class="sbs" style="left:1715px"></i>
<svg style="left:416px;top:1040px" width="13" height="7" shape-rendering="crispEdges"><path d="M3 .5h9M0 2.5h12M0 4.5h12M0 6.5h8" stroke="#1c1c9c" stroke-width="1" fill="none"/></svg>
<div id="task"><i style="left:18px;top:7px;width:8px;height:1px;background:#9aa5a8"></i><i style="left:54px;top:7px;width:4px;height:1px;background:#e8eeee"></i><i style="left:120px;top:7px;width:12px;height:1px;background:#e8c84a"></i><i style="left:283px;top:7px;width:12px;height:1px;background:#e8eeee"></i><i style="left:324px;top:7px;width:4px;height:1px;background:#1e78d0"></i><i style="left:361px;top:7px;width:5px;height:1px;background:#000"></i><i style="left:396px;top:7px;width:4px;height:1px;background:#c0303a"></i></div>

<svg id="ico" width="1920" height="1058" viewBox="0 0 1920 1058" style="left:0;top:0;pointer-events:none"><path d="M4.5 47.5V68" fill="none" stroke="#fbfbfb" stroke-width="1" />
<path d="M5.5 47.5V68 M5.5 68.5h-1.5" fill="none" stroke="#8e8e8e" stroke-width="1" />
<rect x="11.5" y="47.5" width="22" height="20" fill="#c5def3" stroke="#93c9f7" stroke-width="1" />
<path d="M16 54.2h9v9h-9z" fill="#2f6598" />
<path d="M16 54.2l3.2 -3.2h9l-3.2 3.2z" fill="#2f6598" />
<path d="M25 54.2l3.2 -3.2v9l-3.2 3.2z" fill="#2f6598" />
<path d="M16 54.6h8.6v8.6 M25 54.2l2.6 -2.6" fill="none" stroke="#fff" stroke-width="1.15" />
<path d="M37 53h8.2v8.2h-8.2z" fill="#2f6598" />
<path d="M37 53l3.2 -3.2h8.2l-3.2 3.2z" fill="#2f6598" />
<path d="M45.2 53l3.2 -3.2v8.2l-3.2 3.2z" fill="#2f6598" />
<path d="M37 53.4h7.8v7.8 M45.2 53l2.6 -2.6" fill="none" stroke="#fff" stroke-width="1.15" />
<path d="M44.5 57.5h5l2.5 2.5v6h-7.5z" fill="#fff" stroke="#f0f0f0" stroke-width="3" />
<path d="M44.5 57.5h5l2.5 2.5v6h-7.5z" fill="#fff" stroke="#6e6e6e" stroke-width="1.1" />
<path d="M49.5 57.5v2.5h2.5" fill="none" stroke="#6e6e6e" stroke-width="0.9" />
<path d="M61 53h8.2v8.2h-8.2z" fill="#2f6598" />
<path d="M61 53l3.2 -3.2h8.2l-3.2 3.2z" fill="#2f6598" />
<path d="M69.2 53l3.2 -3.2v8.2l-3.2 3.2z" fill="#2f6598" />
<path d="M61 53.4h7.8v7.8 M69.2 53l2.6 -2.6" fill="none" stroke="#fff" stroke-width="1.15" />
<path d="M66 66v-7h8v2h3l-3.5 5z" fill="#f0f0f0" stroke="#f0f0f0" stroke-width="2" />
<path d="M66.7333 59.575H70.62L71.3533 58.33H74.0667V61.0967H70.0333L66.7333 64.4167z" fill="#fff" />
<path d="M66.44 65.8V59.2983H70.4L71.1333 57.915H74.36V61.0967" fill="none" stroke="#c08419" stroke-width="1.2" />
<path d="M66 65.8L70.0333 60.9583H77L73.1133 65.8z" fill="#c08419" />
<path d="M83.5 55.8h7.6l-3.8 4.2z" fill="#1a1a1a" />
<path d="M98 53h8.2v8.2h-8.2z" fill="#a8a8a8" />
<path d="M98 53l3.2 -3.2h8.2l-3.2 3.2z" fill="#a8a8a8" />
<path d="M106.2 53l3.2 -3.2v8.2l-3.2 3.2z" fill="#a8a8a8" />
<path d="M98 53.4h7.8v7.8 M106.2 53l2.6 -2.6" fill="none" stroke="#fff" stroke-width="1.15" />
<rect x="104" y="56" width="11" height="11" fill="#f0f0f0" />
<rect x="105" y="57" width="9" height="9" fill="#a8a8a8" />
<rect x="107" y="58" width="5" height="2.6" fill="#dedede" />
<rect x="108.4" y="63.4" width="2.2" height="2.6" fill="#f0f0f0" />
<rect x="121.5" y="52" width="15" height="11.5" fill="#fff" stroke="#2f6598" stroke-width="1" />
<rect x="121" y="51" width="16" height="2" fill="#2f6598" />
<text x="123.8" y="61.1" font-size="6.8" fill="#2f6598" font-weight="bold" font-family="Liberation Mono, sans-serif" textLength="11" lengthAdjust="spacingAndGlyphs" stroke="#2f6598" stroke-width="0.3">LOG</text>
<path d="M144 53h8.5v8.5h-8.5z" fill="#c08419" />
<path d="M144 53l3.2 -3.2h8.5l-3.2 3.2z" fill="#c08419" />
<path d="M152.5 53l3.2 -3.2v8.5l-3.2 3.2z" fill="#c08419" />
<path d="M144 53.4h8.1v8.1 M152.5 53l2.6 -2.6" fill="none" stroke="#fff" stroke-width="1.15" />
<circle cx="154.8" cy="61.7" r="1.9" fill="#f0f0f0" stroke="#484848" stroke-width="1.3"/>
<line x1="157.1" y1="61.7" x2="159.1" y2="61.7" stroke="#484848" stroke-width="1.2" />
<line x1="156.426" y1="63.3263" x2="157.841" y2="64.7406" stroke="#484848" stroke-width="1.2" />
<line x1="154.8" y1="64" x2="154.8" y2="66" stroke="#484848" stroke-width="1.2" />
<line x1="153.174" y1="63.3263" x2="151.759" y2="64.7406" stroke="#484848" stroke-width="1.2" />
<line x1="152.5" y1="61.7" x2="150.5" y2="61.7" stroke="#484848" stroke-width="1.2" />
<line x1="153.174" y1="60.0737" x2="151.759" y2="58.6594" stroke="#484848" stroke-width="1.2" />
<line x1="154.8" y1="59.4" x2="154.8" y2="57.4" stroke="#484848" stroke-width="1.2" />
<line x1="156.426" y1="60.0737" x2="157.841" y2="58.6594" stroke="#484848" stroke-width="1.2" />
<line x1="165.5" y1="45" x2="165.5" y2="70" stroke="#8a8a8a" stroke-width="1" />
<path d="M170.5 47.5V68" fill="none" stroke="#fbfbfb" stroke-width="1" />
<path d="M171.5 47.5V68 M171.5 68.5h-1.5" fill="none" stroke="#8e8e8e" stroke-width="1" />
<path d="M182.5 54.5h13v6.5l-2.5 2.5h-10.5z" fill="#fff" stroke="#606060" stroke-width="1" />
<path d="M193 63.5v-2.5h2.5" fill="none" stroke="#606060" stroke-width="0.8" />
<path d="M203.5 55.8h7.6l-3.8 4.2z" fill="#1a1a1a" />
<path d="M220.033 54.875H225.51L226.543 53.15H230.367V56.9833H224.683L220.033 61.5833z" fill="#fff" />
<path d="M219.62 63.5V54.4917H225.2L226.233 52.575H230.78V56.9833" fill="none" stroke="#c08419" stroke-width="1.2" />
<path d="M219 63.5L224.683 56.7917H234.5L229.023 63.5z" fill="#c08419" />
<path d="M241.5 55.8h7.6l-3.8 4.2z" fill="#1a1a1a" />
<rect x="258.5" y="50.5" width="14" height="14" fill="none" stroke="#757575" stroke-width="1.2" />
<rect x="260.5" y="50.5" width="10" height="7.05" fill="none" stroke="#757575" stroke-width="1.1" />
<rect x="262.5" y="59.45" width="7" height="5.05" fill="none" stroke="#757575" stroke-width="1.1" />
<rect x="265" y="62" width="3" height="1" fill="#757575" />
<path d="M279.5 55.8h7.6l-3.8 4.2z" fill="#1a1a1a" />
<path d="M294.5 61.5V51.5H305 M296.5 63.5V53.5H307" fill="none" stroke="#a8a8a8" stroke-width="1" />
<rect x="298.2" y="55.2" width="10.8" height="10.5" fill="#a0a0a0" />
<rect x="300.2" y="56.2" width="6.4" height="2.8" fill="#f4f4f4" />
<rect x="301.2" y="62" width="4.4" height="3" fill="#f4f4f4" />
<rect x="302.6" y="56.2" width="1.6" height="1" fill="#a0a0a0" />
<rect x="302.8" y="64" width="1.2" height="1" fill="#a0a0a0" />
<line x1="316.5" y1="49" x2="316.5" y2="67" stroke="#8a8a8a" stroke-width="1" />
<path d="M330.5 54V65.7 M330.5 63.5H334 M330.5 57.5H334" fill="none" stroke="#757575" stroke-width="1" />
<circle cx="330.5" cy="52.6" r="2.7" fill="#c08419"/>
<circle cx="335.6" cy="57.5" r="2.7" fill="#c08419"/>
<circle cx="335.6" cy="63.5" r="2.7" fill="#c08419"/>
<line x1="347.5" y1="49" x2="347.5" y2="67" stroke="#8a8a8a" stroke-width="1" />
<line x1="362.8" y1="60.2" x2="358" y2="65" stroke="#c08419" stroke-width="3" stroke-linecap="round"/>
<line x1="362.6" y1="60.4" x2="358.4" y2="64.6" stroke="#fff" stroke-width="1" stroke-linecap="round"/>
<circle cx="367" cy="56" r="4.7" fill="#fff" stroke="#2f6598" stroke-width="1.2"/>
<text x="379.7" y="58.5" font-size="8.2" fill="#2f6598" font-weight="bold" font-family="Liberation Mono, sans-serif" >A</text>
<path d="M385.2 54h4 M387.4 52l2 2l-2 2" fill="none" stroke="#c08419" stroke-width="1.1" />
<text x="389.9" y="55.6" font-size="7.6" fill="#cc2229" font-weight="bold" font-family="Liberation Mono, sans-serif" stroke="#cc2229" stroke-width="0.3">Z</text>
<line x1="387.97" y1="62.53" x2="384" y2="65.5" stroke="#c08419" stroke-width="2" stroke-linecap="round"/>
<circle cx="390" cy="60.5" r="2.9" fill="#fff" stroke="#2f6598" stroke-width="1.1"/>
<path d="M402 52h13.5v8.5h-13.5z" fill="#c08419" />
<path d="M408.075 52l1.5 -2h5.925v2z" fill="#c08419" />
<line x1="409.75" y1="51.6" x2="414.5" y2="51.6" stroke="#f6e2b8" stroke-width="0.9" />
<line x1="411.12" y1="62.88" x2="407.5" y2="65.5" stroke="#c08419" stroke-width="2" stroke-linecap="round"/>
<circle cx="413.5" cy="60.5" r="3.4" fill="#fff" stroke="#2f6598" stroke-width="1.1"/>
<text x="424.6" y="60.8" font-size="11.5" fill="#2f6598" font-weight="bold" font-family="Liberation Mono, sans-serif" >{</text>
<text x="433.6" y="60.8" font-size="11.5" fill="#2f6598" font-weight="bold" font-family="Liberation Mono, sans-serif" >}</text>
<path d="M432.5 54.5v6 M429.5 57.5h6" fill="none" stroke="#cc2229" stroke-width="1.4" />
<rect x="449.5" y="52.5" width="14" height="10.5" fill="#fff" stroke="#808080" stroke-width="1" />
<line x1="456.5" y1="52.5" x2="456.5" y2="63" stroke="#808080" stroke-width="1" />
<line x1="451" y1="54.5" x2="455" y2="54.5" stroke="#b9c8e6" stroke-width="1" />
<line x1="451" y1="56.5" x2="455" y2="56.5" stroke="#b9c8e6" stroke-width="1" />
<line x1="451" y1="58.5" x2="455" y2="58.5" stroke="#b9c8e6" stroke-width="1" />
<line x1="451" y1="60.5" x2="455" y2="60.5" stroke="#b9c8e6" stroke-width="1" />
<line x1="458" y1="54.5" x2="459" y2="54.5" stroke="#b9c8e6" stroke-width="1" />
<line x1="458" y1="56.5" x2="459" y2="56.5" stroke="#b9c8e6" stroke-width="1" />
<line x1="458" y1="58.5" x2="459" y2="58.5" stroke="#b9c8e6" stroke-width="1" />
<line x1="458" y1="60.5" x2="459" y2="60.5" stroke="#b9c8e6" stroke-width="1" />
<path d="M459.3 52h3.3v13l-1.65 -1.8l-1.65 1.8z" fill="#cc2229" />
<line x1="470.5" y1="49" x2="470.5" y2="67" stroke="#8a8a8a" stroke-width="1" />
<path d="M481.5 50.5h8.5l4 4v11h-12.5z" fill="#fff" stroke="#7a7a7a" stroke-width="1.15" />
<path d="M490 50.5v4h4" fill="none" stroke="#7a7a7a" stroke-width="1" />
<line x1="485.36" y1="59.54" x2="480.8" y2="64.5" stroke="#c08419" stroke-width="2" stroke-linecap="round"/>
<circle cx="487.6" cy="57.3" r="3.2" fill="#fff" stroke="#2f6598" stroke-width="1.1"/>
<rect x="502.3" y="56.6" width="14.8" height="6.2" fill="#6a6a6a" />
<rect x="506.5" y="51.5" width="6.5" height="4.5" fill="#fff" stroke="#6a6a6a" stroke-width="1" />
<rect x="505.5" y="55.3" width="8.6" height="2.2" fill="#2f6598" />
<rect x="506.5" y="61.5" width="6.5" height="4.2" fill="#fff" stroke="#6a6a6a" stroke-width="1" />
<rect x="508.2" y="63" width="3.2" height="1" fill="#6a6a6a" />
<rect x="514.8" y="60" width="1.2" height="1.2" fill="#fff" />
<line x1="523.5" y1="45" x2="523.5" y2="70" stroke="#8a8a8a" stroke-width="1" />
<path d="M528.5 47.5V68" fill="none" stroke="#fbfbfb" stroke-width="1" />
<path d="M529.5 47.5V68 M529.5 68.5h-1.5" fill="none" stroke="#8e8e8e" stroke-width="1" />
<path d="M539.5 58l7.5 -6.2v3.5c3 0 5.5 -1.5 6.8 -4.3c1 5.5 -2 9.5 -6.8 9.8v3.7z" fill="#fff" stroke="#d0901a" stroke-width="1" stroke-linejoin="round"/>
<path d="M576.5 58l-7.5 -6.2v3.5c-3 0 -5.5 -1.5 -6.8 -4.3c-1 5.5 2 9.5 6.8 9.8v3.7z" fill="none" stroke="#b8b8b8" stroke-width="1" stroke-linejoin="round"/>
<line x1="583.5" y1="49" x2="583.5" y2="67" stroke="#8a8a8a" stroke-width="1" />
<path d="M597 51l5.2 10 M603 51l-5.2 10" fill="none" stroke="#a8a8a8" stroke-width="1.3" />
<circle cx="596.4" cy="62.8" r="2" fill="none" stroke="#a8a8a8" stroke-width="1.1"/>
<circle cx="603.6" cy="62.8" r="2" fill="none" stroke="#a8a8a8" stroke-width="1.1"/>
<path d="M616.5 62.5V51.5h7" fill="none" stroke="#a8a8a8" stroke-width="1" />
<path d="M619.5 53.5h6.5l4 4v8h-10.5z" fill="#f4f4f4" stroke="#a8a8a8" stroke-width="1" />
<line x1="621.5" y1="57.5" x2="627.5" y2="57.5" stroke="#a8a8a8" stroke-width="1" />
<line x1="621.5" y1="59.5" x2="627.5" y2="59.5" stroke="#a8a8a8" stroke-width="1" />
<line x1="621.5" y1="61.5" x2="627.5" y2="61.5" stroke="#a8a8a8" stroke-width="1" />
<line x1="621.5" y1="63.5" x2="627.5" y2="63.5" stroke="#a8a8a8" stroke-width="1" />
<rect x="617.5" y="54" width="1" height="1" fill="#a8a8a8" />
<rect x="617.5" y="56" width="1" height="1" fill="#a8a8a8" />
<rect x="617.5" y="58" width="1" height="1" fill="#a8a8a8" />
<rect x="617.5" y="60" width="1" height="1" fill="#a8a8a8" />
<rect x="639" y="53" width="12.2" height="11.8" fill="#c08419" />
<rect x="643.6" y="55.5" width="9.5" height="10.5" fill="#f3f3f3" />
<rect x="641.6" y="50.6" width="7" height="3.2" fill="#f0f0f0" />
<rect x="642.3" y="51.6" width="5.6" height="2" fill="#777" />
<rect x="643.6" y="50.1" width="3" height="2" fill="none" stroke="#777" stroke-width="1.1" />
<path d="M645.9 57.7h4.2l2.4 2.4v5.4h-6.6z" fill="#fff" stroke="#6e6e6e" stroke-width="1.1" />
<path d="M650.1 57.7v2.4h2.4" fill="none" stroke="#6e6e6e" stroke-width="0.9" />
<path d="M664.3 53.2l10.6 10.6 M674.9 53.2l-10.6 10.6" fill="none" stroke="#a6a6a6" stroke-width="3.1" />
<line x1="682.5" y1="45" x2="682.5" y2="70" stroke="#8a8a8a" stroke-width="1" />
<path d="M687.5 47.5V68" fill="none" stroke="#fbfbfb" stroke-width="1" />
<path d="M688.5 47.5V68 M688.5 68.5h-1.5" fill="none" stroke="#8e8e8e" stroke-width="1" />
<rect x="699" y="51" width="1" height="1" fill="#2f6598" shape-rendering="crispEdges"/>
<rect x="699" y="53" width="12" height="1" fill="#2f6598" shape-rendering="crispEdges"/>
<rect x="699" y="55" width="12" height="2" fill="#2f6598" shape-rendering="crispEdges"/>
<rect x="699" y="58" width="5" height="2" fill="#2f6598" shape-rendering="crispEdges"/>
<rect x="699" y="61" width="5" height="1" fill="#2f6598" shape-rendering="crispEdges"/>
<rect x="699" y="63" width="5" height="1" fill="#2f6598" shape-rendering="crispEdges"/>
<rect x="699" y="65" width="5" height="1" fill="#2f6598" shape-rendering="crispEdges"/>
<path d="M710.3 59v3.4h-4" fill="none" stroke="#cc2229" stroke-width="1.5" />
<path d="M708.2 60l-3.4 2.4l3.4 2.4z" fill="#cc2229" />
<text x="723.6" y="61.4" font-size="13.5" fill="#6e6e6e" font-weight="bold" font-family="Liberation Sans, sans-serif" textLength="10.5" lengthAdjust="spacingAndGlyphs">&#182;</text>
<rect x="740.5" y="47.5" width="22" height="20" fill="#c5def3" stroke="#93c9f7" stroke-width="1" />
<rect x="747" y="52" width="12" height="13" fill="#fff" />
<line x1="746.5" y1="52" x2="746.5" y2="65" stroke="#808080" stroke-width="1.2" />
<line x1="759.5" y1="52" x2="759.5" y2="65" stroke="#808080" stroke-width="1.2" />
<line x1="748" y1="53.5" x2="750.5" y2="53.5" stroke="#5aa05a" stroke-width="1.1" />
<line x1="753" y1="53.5" x2="758" y2="53.5" stroke="#e09a30" stroke-width="1.1" />
<line x1="748" y1="55.5" x2="754" y2="55.5" stroke="#e05a5a" stroke-width="1.1" />
<line x1="748" y1="57.5" x2="753" y2="57.5" stroke="#2f6598" stroke-width="1.1" />
<line x1="754" y1="57.5" x2="758" y2="57.5" stroke="#e09a30" stroke-width="1.1" />
<line x1="748" y1="59.5" x2="756" y2="59.5" stroke="#2f6598" stroke-width="1.1" />
<line x1="748" y1="61.5" x2="751.5" y2="61.5" stroke="#e09a30" stroke-width="1.1" />
<line x1="753" y1="61.5" x2="758" y2="61.5" stroke="#5aa05a" stroke-width="1.1" />
<line x1="748" y1="63.5" x2="754" y2="63.5" stroke="#e05a5a" stroke-width="1.1" />
<text x="768" y="56.1" font-size="7" fill="#cc2229" font-weight="bold" font-family="Liberation Mono, sans-serif" >C</text>
<path d="M774.6 52.3v3.2 M773 53.9h3.2 M778.8 52.3v3.2 M777.2 53.9h3.2" fill="none" stroke="#cc2229" stroke-width="1.1" />
<path d="M767.3 61L770.5 57.8" fill="none" stroke="#5ab432" stroke-width="2.1" stroke-linecap="square"/>
<path d="M767.3 61L770.5 64.2" fill="none" stroke="#2b5fa8" stroke-width="2.1" stroke-linecap="square"/>
<path d="M777.5 57.8L780.7 61" fill="none" stroke="#2b5fa8" stroke-width="2.1" stroke-linecap="square"/>
<path d="M780.7 61L777.5 64.2" fill="none" stroke="#5ab432" stroke-width="2.1" stroke-linecap="square"/>
<path d="M770.5 57.8L777.5 64.2" fill="none" stroke="#e8b616" stroke-width="2.1" stroke-linecap="square"/>
<path d="M770.5 64.2L777.5 57.8" fill="none" stroke="#cc2229" stroke-width="2.1" stroke-linecap="square"/>
<rect x="791" y="52" width="12" height="13" fill="#fff" />
<line x1="790.5" y1="52" x2="790.5" y2="65" stroke="#808080" stroke-width="1.2" />
<line x1="803.5" y1="52" x2="803.5" y2="65" stroke="#808080" stroke-width="1.2" />
<rect x="792.6" y="53" width="2.4" height="2.8" fill="#2f6598" />
<rect x="792.6" y="57.5" width="2.4" height="2.8" fill="#2f6598" />
<rect x="792.6" y="62" width="2.4" height="2.8" fill="#2f6598" />
<line x1="797" y1="53.5" x2="802" y2="53.5" stroke="#c3cde3" stroke-width="1" />
<line x1="796" y1="55.5" x2="798.5" y2="55.5" stroke="#c3cde3" stroke-width="1" />
<line x1="796" y1="57.5" x2="797.5" y2="57.5" stroke="#c3cde3" stroke-width="1" />
<line x1="799" y1="57.5" x2="802" y2="57.5" stroke="#c3cde3" stroke-width="1" />
<line x1="797" y1="59.5" x2="800" y2="59.5" stroke="#c3cde3" stroke-width="1" />
<line x1="798" y1="61.5" x2="802" y2="61.5" stroke="#c3cde3" stroke-width="1" />
<line x1="796" y1="63.5" x2="798.5" y2="63.5" stroke="#c3cde3" stroke-width="1" />
<rect x="814" y="56" width="12.2" height="8.8" fill="#c08419" />
<path d="M817.6 54.3l-.5 -1.2l1.6 -1.4h2.8l2 1.9v2.6" fill="none" stroke="#c08419" stroke-width="1.6" />
<circle cx="820.3" cy="59.2" r="1.15" fill="#fff"/>
<rect x="819.8" y="59.2" width="1.1" height="4.3" fill="#fff" />
<text x="836.6" y="59.1" font-size="6.6" fill="#686868" font-weight="bold" font-family="Liberation Mono, sans-serif" textLength="15.4" lengthAdjust="spacingAndGlyphs" stroke="#686868" stroke-width="0.25">SPELL</text>
<path d="M837 62.9l1.9 -1.7l1.9 1.7l1.9 -1.7l1.9 1.7l1.9 -1.7l1.9 1.7l1.9 -1.7" fill="none" stroke="#5a5a5a" stroke-width="1" stroke-linejoin="round"/>
<path d="M858.3 55.8h7.6l-3.8 4.2z" fill="#1a1a1a" />
<path d="M879.2 54h2.2l2 2.2h1.6l2 -2.2h2.1v9h-2.1l-2 -2.2h-1.6l-2 2.2h-2.2z" fill="#c08419" />
<path d="M879.2 57.6h-3.6l-1.3 .9l1.3 .9h3.6" fill="#fff" stroke="#7a7a7a" stroke-width="0.9" />
<line x1="894.5" y1="45" x2="894.5" y2="70" stroke="#8a8a8a" stroke-width="1" />
<path d="M899.5 47.5V68" fill="none" stroke="#fbfbfb" stroke-width="1" />
<path d="M900.5 47.5V68 M900.5 68.5h-1.5" fill="none" stroke="#8e8e8e" stroke-width="1" />
<path d="M909.2 59.5h5.2 M912 57l2.6 2.5l-2.6 2.5" fill="none" stroke="#c08419" stroke-width="1.2" />
<line x1="917.5" y1="57" x2="917.5" y2="62" stroke="#6a6a6a" stroke-width="1.2" />
<line x1="917.5" y1="54" x2="917.5" y2="65" stroke="#6a6a6a" stroke-width="1" stroke-dasharray="1.5 1.5"/>
<line x1="913" y1="52.5" x2="925" y2="52.5" stroke="#2f6598" stroke-width="1.1" />
<line x1="919" y1="54.5" x2="925" y2="54.5" stroke="#2f6598" stroke-width="1.1" />
<line x1="919" y1="56.5" x2="925" y2="56.5" stroke="#2f6598" stroke-width="1.1" />
<line x1="919" y1="58.5" x2="925" y2="58.5" stroke="#2f6598" stroke-width="1.1" />
<line x1="922" y1="60.5" x2="925" y2="60.5" stroke="#2f6598" stroke-width="1.1" />
<line x1="919" y1="62.5" x2="925" y2="62.5" stroke="#2f6598" stroke-width="1.1" />
<line x1="916" y1="64.5" x2="925" y2="64.5" stroke="#2f6598" stroke-width="1.1" />
<rect x="933" y="50.3" width="12" height="2" fill="#c08419" />
<rect x="933" y="52" width="1.6" height="1.2" fill="#c08419" />
<rect x="933" y="59.8" width="12" height="2.2" fill="#c08419" />
<rect x="933" y="58.7" width="1.6" height="1.2" fill="#c08419" />
<rect x="935" y="53.6" width="5" height="4.8" fill="#fff" stroke="#777" stroke-width="1.2" />
<path d="M943.6 52.6l-1.6 1.6l1.6 1.6l-1.6 1.6l1.6 1.6" fill="none" stroke="#777" stroke-width="1" />
<line x1="943" y1="62" x2="943" y2="64.5" stroke="#6e6e6e" stroke-width="1.2" />
<line x1="939" y1="64.5" x2="947" y2="64.5" stroke="#6e6e6e" stroke-width="1.2" />
<rect x="938" y="63.2" width="2.2" height="2.6" fill="#6e6e6e" />
<rect x="946" y="63.2" width="2.2" height="2.6" fill="#6e6e6e" />
<path d="M962.4 57.4L955.36 55.11A7.4 7.4 0 0 1 962.40 50.00z" fill="#e7773d" stroke="#fbfbfb" stroke-width="0.9" />
<path d="M962.4 57.4L962.40 50.00A7.4 7.4 0 0 1 969.44 55.11z" fill="#e9c892" stroke="#fbfbfb" stroke-width="0.9" />
<path d="M962.4 57.4L969.44 55.11A7.4 7.4 0 0 1 966.75 63.39z" fill="#7fb27c" stroke="#fbfbfb" stroke-width="0.9" />
<path d="M962.4 57.4L966.75 63.39A7.4 7.4 0 0 1 958.05 63.39z" fill="#2f6598" stroke="#fbfbfb" stroke-width="0.9" />
<path d="M962.4 57.4L958.05 63.39A7.4 7.4 0 0 1 955.36 55.11z" fill="#cc2229" stroke="#fbfbfb" stroke-width="0.9" />
<path d="M985.6 56.6L978.75 54.38A7.2 7.2 0 0 1 985.60 49.40z" fill="#e7773d" stroke="#fbfbfb" stroke-width="0.9" />
<path d="M985.6 56.6L985.60 49.40A7.2 7.2 0 0 1 992.45 54.38z" fill="#e9c892" stroke="#fbfbfb" stroke-width="0.9" />
<path d="M985.6 56.6L992.45 54.38A7.2 7.2 0 0 1 989.83 62.42z" fill="#7fb27c" stroke="#fbfbfb" stroke-width="0.9" />
<path d="M985.6 56.6L989.83 62.42A7.2 7.2 0 0 1 981.37 62.42z" fill="#f0f0f0" stroke="#fbfbfb" stroke-width="0.9" />
<path d="M985.6 56.6L981.37 62.42A7.2 7.2 0 0 1 978.75 54.38z" fill="#cc2229" stroke="#fbfbfb" stroke-width="0.9" />
<rect x="981.3" y="59.6" width="13.4" height="6.2" fill="#fafafa" />
<text x="981.8" y="65.2" font-size="7.4" fill="#000" font-weight="bold" font-family="Liberation Sans, sans-serif" textLength="12.4" lengthAdjust="spacingAndGlyphs" stroke="#000" stroke-width="0.3">#10</text>
<text x="1001" y="56.3" font-size="6.6" fill="#2f6598" font-weight="bold" font-family="Liberation Mono, sans-serif" textLength="16.5" lengthAdjust="spacingAndGlyphs">HTML</text>
<text x="1005.8" y="65.2" font-size="6.8" fill="#cc2229" font-weight="bold" font-family="Liberation Mono, sans-serif" textLength="12" lengthAdjust="spacingAndGlyphs">TXT</text>
<path d="M1002 58v4.5h3 M1003.5 60.7l1.8 1.8l-1.8 1.8" fill="none" stroke="#c08419" stroke-width="1.1" />
<path d="M1027.6 55.2l-3.2 3.4l3.2 3.4" fill="none" stroke="#777" stroke-width="1.3" />
<text x="1028.6" y="62.4" font-size="10.3" fill="#cc2229" font-weight="bold" font-family="Liberation Sans, sans-serif" textLength="11.6" lengthAdjust="spacingAndGlyphs">TAG</text>
<path d="M1050.6 55.2l-3.2 3.4l3.2 3.4" fill="none" stroke="#777" stroke-width="1.3" />
<text x="1052" y="62.2" font-size="9" fill="#cc2229" font-weight="bold" font-family="Liberation Sans, sans-serif" textLength="12" lengthAdjust="spacingAndGlyphs">tag</text>
<path d="M1070.5 50.5h8.5l3.5 3.5v9h-12z" fill="#fff" stroke="#8a8a8a" stroke-width="1" />
<line x1="1072" y1="53.5" x2="1077" y2="53.5" stroke="#c0c0c0" stroke-width="1" />
<line x1="1072" y1="55.5" x2="1077" y2="55.5" stroke="#c0c0c0" stroke-width="1" />
<line x1="1072" y1="57.5" x2="1077" y2="57.5" stroke="#c0c0c0" stroke-width="1" />
<circle cx="1080.1" cy="60.2" r="5.6" fill="#fff" stroke="#2f6598" stroke-width="1.3"/>
<path d="M1078.1 55v10.4 M1082.1 55v10.4 M1074.9 58.2h10.4 M1074.9 62.2h10.4" fill="none" stroke="#2f6598" stroke-width="1.1" />
<path d="M1093.8 52h7.4v13h-1.2l-6.2 -9.5z" fill="#2f6598" />
<path d="M1101.2 52h7.2v3.5l-6 9.5h-1.2z" fill="#c08419" />
<text x="1095.4" y="63.3" font-size="13.6" fill="#fff" font-weight="bold" font-family="Liberation Sans, sans-serif" textLength="11.4" lengthAdjust="spacingAndGlyphs">T</text>
<text x="1116.4" y="65" font-size="20" fill="#3069dc" font-weight="normal" font-family="Liberation Serif, sans-serif" >G</text>
<line x1="1137.5" y1="45" x2="1137.5" y2="70" stroke="#8a8a8a" stroke-width="1" />
<path d="M1142.5 47.5V68" fill="none" stroke="#fbfbfb" stroke-width="1" />
<path d="M1143.5 47.5V68 M1143.5 68.5h-1.5" fill="none" stroke="#8e8e8e" stroke-width="1" />
<rect x="1152.5" y="52" width="15" height="11.5" fill="none" stroke="#a8a8a8" stroke-width="1" />
<rect x="1152" y="51" width="16" height="2" fill="#a8a8a8" />
<path d="M1158 54.5l4.5 3.5l-4.5 3.5z" fill="#a8a8a8" />
<rect x="1175.5" y="52" width="15" height="11.5" fill="none" stroke="#a8a8a8" stroke-width="1" />
<rect x="1175" y="51" width="16" height="2" fill="#a8a8a8" />
<text x="1177.2" y="62" font-size="6.8" fill="#a8a8a8" font-weight="normal" font-family="Liberation Sans, sans-serif" textLength="13" lengthAdjust="spacingAndGlyphs">1010</text>
<rect x="1199" y="52" width="14" height="12" fill="#424242" />
<line x1="1200" y1="53.5" x2="1212" y2="53.5" stroke="#fff" stroke-width="1" />
<text x="1199.8" y="61.6" font-size="6.6" fill="#fff" font-weight="bold" font-family="Liberation Sans, sans-serif" textLength="12.4" lengthAdjust="spacingAndGlyphs">C:\_</text>
<line x1="1219.5" y1="45" x2="1219.5" y2="70" stroke="#8a8a8a" stroke-width="1" />
<path d="M1224.5 47.5V68" fill="none" stroke="#fbfbfb" stroke-width="1" />
<path d="M1225.5 47.5V68 M1225.5 68.5h-1.5" fill="none" stroke="#8e8e8e" stroke-width="1" />
<rect x="1237.5" y="52.5" width="10.5" height="10.5" fill="#fff" stroke="#8a8a8a" stroke-width="1.1" />
<rect x="1240" y="55" width="5.2" height="5.2" fill="#cc2229" />
<circle cx="1259.5" cy="57" r="2.3" fill="none" stroke="#808080" stroke-width="1.1"/>
<circle cx="1266.5" cy="57" r="2.3" fill="none" stroke="#808080" stroke-width="1.1"/>
<path d="M1261.8 56.4h2.4 M1257.4 56l2.3 -3.5l1 .8 M1268.7 56l2.4 -3.6l1 1" fill="none" stroke="#808080" stroke-width="1" />
<line x1="1278.5" y1="45" x2="1278.5" y2="70" stroke="#8a8a8a" stroke-width="1" />
<path d="M7 102.2h8.8v8.8h-8.8z" fill="#2f6598" />
<path d="M7 102.2l3.2 -3.2h8.8l-3.2 3.2z" fill="#2f6598" />
<path d="M15.8 102.2l3.2 -3.2v8.8l-3.2 3.2z" fill="#2f6598" />
<path d="M7 102.6h8.4v8.4 M15.8 102.2l2.6 -2.6" fill="none" stroke="#fff" stroke-width="1.15" />
<path d="M37 104h13v8.8h-13z" fill="#c08419" />
<path d="M42.85 104l1.5 -2h5.65v2z" fill="#c08419" />
<line x1="44.5" y1="103.6" x2="49" y2="103.6" stroke="#f6e2b8" stroke-width="0.9" />
<rect x="67" y="102.6" width="14" height="8.8" fill="#fff" stroke="#2f6598" stroke-width="1.4" />
<text x="68.5" y="109.8" font-size="6.8" fill="#1f5488" font-weight="bold" font-family="Liberation Mono, sans-serif" textLength="11" lengthAdjust="spacingAndGlyphs" stroke="#1f5488" stroke-width="0.35">FTP</text>
<rect x="72.5" y="111.5" width="3" height="2" fill="#2f6598" />
<rect x="66" y="113.2" width="16" height="1.2" fill="#2f6598" />
<path d="M104 114.8c-10 -6.5 -9 -13.6 -4 -13.8c2 0 3.4 1 4 2.6c.6 -1.6 2 -2.6 4 -2.6c5 .2 6 7.3 -4 13.8z" fill="#cc2229" />
<path d="M126.5 109V102h13.5" fill="none" stroke="#2f6598" stroke-width="1.3" />
<rect x="126" y="101.5" width="14" height="1.6" fill="#2f6598" />
<rect x="129.2" y="105.7" width="12.2" height="9.6" fill="#fff" stroke="#2f6598" stroke-width="1.3" />
<rect x="128.6" y="105" width="13.4" height="2" fill="#2f6598" />
<path d="M7 126h13v8.8h-13z" fill="#c08419" />
<path d="M12.85 126l1.5 -2h5.65v2z" fill="#c08419" />
<line x1="14.5" y1="125.6" x2="19" y2="125.6" stroke="#f6e2b8" stroke-width="0.9" />
<path d="M19 133.6v5.6 M16.2 136.4h5.6" fill="none" stroke="#2f6598" stroke-width="1.8" />
<path d="M30 126h13v8.8h-13z" fill="#c08419" />
<path d="M35.85 126l1.5 -2h5.65v2z" fill="#c08419" />
<line x1="37.5" y1="125.6" x2="42" y2="125.6" stroke="#f6e2b8" stroke-width="0.9" />
<path d="M39.3 134.2l5 5 M44.3 134.2l-5 5" fill="none" stroke="#cc2229" stroke-width="1.6" />
<path d="M54.5 130h13v6l-2.5 2.5h-10.5z" fill="#fff" stroke="#555" stroke-width="1" />
<path d="M65 138.5v-2.5h2.5" fill="none" stroke="#555" stroke-width="0.8" />
<path d="M56 125v5.6 M53.2 127.8h5.6" fill="none" stroke="#2f6598" stroke-width="1.8" />
<path d="M77.5 130h13v6l-2.5 2.5h-10.5z" fill="#f0f0f0" stroke="#b0b0b0" stroke-width="1" />
<path d="M88 138.5v-2.5h2.5" fill="none" stroke="#b0b0b0" stroke-width="0.8" />
<path d="M76.5 125.5l4 4.2 M80.5 125.5l-4 4.2" fill="none" stroke="#a0a0a0" stroke-width="1.2" />
<circle cx="107" cy="132" r="7" fill="#a0a0a0"/>
<text x="105.2" y="136.4" font-size="12" fill="#fff" font-weight="bold" font-family="Liberation Serif, sans-serif" >i</text>
<line x1="121.5" y1="123" x2="121.5" y2="141" stroke="#808080" stroke-width="1" />
<path d="M133.5 128.5l10.5 10.5" fill="none" stroke="#fff" stroke-width="3.4" stroke-linecap="round"/>
<path d="M133.5 128.5l10.5 10.5" fill="none" stroke="#8a8a8a" stroke-width="3.4" stroke-linecap="round"/>
<path d="M134 129l10 10" fill="none" stroke="#fff" stroke-width="1.8" stroke-linecap="round"/>
<circle cx="132.8" cy="127.8" r="2.6" fill="#fff" stroke="#8a8a8a" stroke-width="1.1"/>
<rect x="129" y="124" width="3.5" height="3.2" fill="#f0f0f0" stroke="none" stroke-width="0" transform="rotate(-45 132.8 127.8)"/>
<line x1="144.5" y1="126" x2="138" y2="132.5" stroke="#808080" stroke-width="1.1" />
<line x1="137" y1="133.5" x2="131" y2="139.5" stroke="#c08419" stroke-width="2.6" />
<line x1="136.8" y1="134.6" x2="131.6" y2="139.8" stroke="#f3dca6" stroke-width="0.7" />
<path d="M11.5 147.6h6.3v6.3h-6.3z" fill="#2f6598" />
<path d="M11.5 147.6l2.6 -2.6h6.3l-2.6 2.6z" fill="#2f6598" />
<path d="M17.8 147.6l2.6 -2.6v6.3l-2.6 2.6z" fill="#2f6598" />
<path d="M11.5 148h5.9v5.9 M17.8 147.6l2 -2" fill="none" stroke="#fff" stroke-width="1.15" />
<path d="M9 150.8h6.6v6.6h-6.6z" fill="#2f6598" />
<path d="M9 150.8l2.6 -2.6h6.6l-2.6 2.6z" fill="#2f6598" />
<path d="M15.6 150.8l2.6 -2.6v6.6l-2.6 2.6z" fill="#2f6598" />
<path d="M9 151.2h6.2v6.2 M15.6 150.8l2 -2" fill="none" stroke="#fff" stroke-width="1.15" />
<path d="M14.5 159.5v-5.5h4l.8 -1h3.2v2" fill="#fff" stroke="#c08419" stroke-width="1.1" />
<path d="M14 160.5l2.8 -4.5h8.4l-3 4.5z" fill="#c08419" />
<path d="M29 165h13v8.8h-13z" fill="#c08419" />
<path d="M34.85 165l1.5 -2h5.65v2z" fill="#c08419" />
<line x1="36.5" y1="164.6" x2="41" y2="164.6" stroke="#f6e2b8" stroke-width="0.9" />
<path d="M17.5 161v8.5h11" fill="none" stroke="#808080" stroke-width="1" stroke-dasharray="1 1" shape-rendering="crispEdges"/>
<rect x="5.6" y="4.6" width="8.8" height="7.8" fill="#2b83b0" stroke="#000" stroke-width="1.3" />
<path d="M6.3 11.7c1.2 -3 6.2 -3 7.4 0z" fill="#a9cfdc" />
<path d="M5.3 13.6l4.7 5l4.7 -5" fill="#fff" stroke="#000" stroke-width="1.2" stroke-linejoin="round"/>
<path d="M8.3 14.7h3.4l-1.7 1.7z" fill="#0d4f86" />
<rect x="8.8" y="25.7" width="9.8" height="12.6" fill="#cfeaf8" stroke="#5a6058" stroke-width="1" />
<path d="M11.5 35.5l1 -3.2l7 -7l2.2 2.2l-7 7z" fill="#f4a21c" />
<path d="M19.5 25.3l1.2 -1.2l2.2 2.2l-1.2 1.2z" fill="#e8555a" />
<path d="M11.5 35.5l1 -3.2l2.2 2.2z" fill="#222" />
<line x1="1799" y1="10.5" x2="1809" y2="10.5" stroke="#8a8a8a" stroke-width="1" />
<rect x="1846.5" y="5.5" width="7" height="7" fill="none" stroke="#8a8a8a" stroke-width="1" />
<rect x="1844.5" y="7.5" width="7" height="7" fill="#fff" stroke="#8a8a8a" stroke-width="1" />
<path d="M1890 5l10 10 M1900 5l-10 10" fill="none" stroke="#8a8a8a" stroke-width="1" />
<rect x="1863" y="24" width="18" height="18" fill="#e5e5e5" />
<rect x="1882" y="24" width="18" height="18" fill="#e5e5e5" />
<rect x="1901" y="24" width="18" height="18" fill="#e5e5e5" />
<rect x="1868" y="35" width="6" height="2" fill="#7588a3" />
<path d="M1889.5 31.5v-2h5v4.5h-1.5" fill="none" stroke="#7588a3" stroke-width="1.3" />
<rect x="1889" y="29" width="6" height="1.6" fill="#7588a3" />
<rect x="1887.5" y="32.6" width="5" height="3.6" fill="none" stroke="#7588a3" stroke-width="1.3" />
<rect x="1887" y="32" width="6.2" height="1.8" fill="#7588a3" />
<path d="M1907.5 30.3l6 6 M1913.5 30.3l-6 6" fill="none" stroke="#7588a3" stroke-width="2" />
<path d="M1704.4 124.35L1707.5 120.25L1710.6 124.35" fill="none" stroke="#555" stroke-width="2" />
<path d="M1704.4 1005.95L1707.5 1010.05L1710.6 1005.95" fill="none" stroke="#555" stroke-width="2" />
<path d="M194.05 1021.4L189.95 1024.5L194.05 1027.6" fill="none" stroke="#555" stroke-width="2" />
<path d="M1688.95 1021.4L1693.05 1024.5L1688.95 1027.6" fill="none" stroke="#555" stroke-width="2" />
<path d="M1903.4 144.35L1906.5 140.25L1909.6 144.35" fill="none" stroke="#555" stroke-width="2" />
<path d="M1903.4 1004.95L1906.5 1009.05L1909.6 1004.95" fill="none" stroke="#555" stroke-width="2" /></svg>
</div></body></html>
